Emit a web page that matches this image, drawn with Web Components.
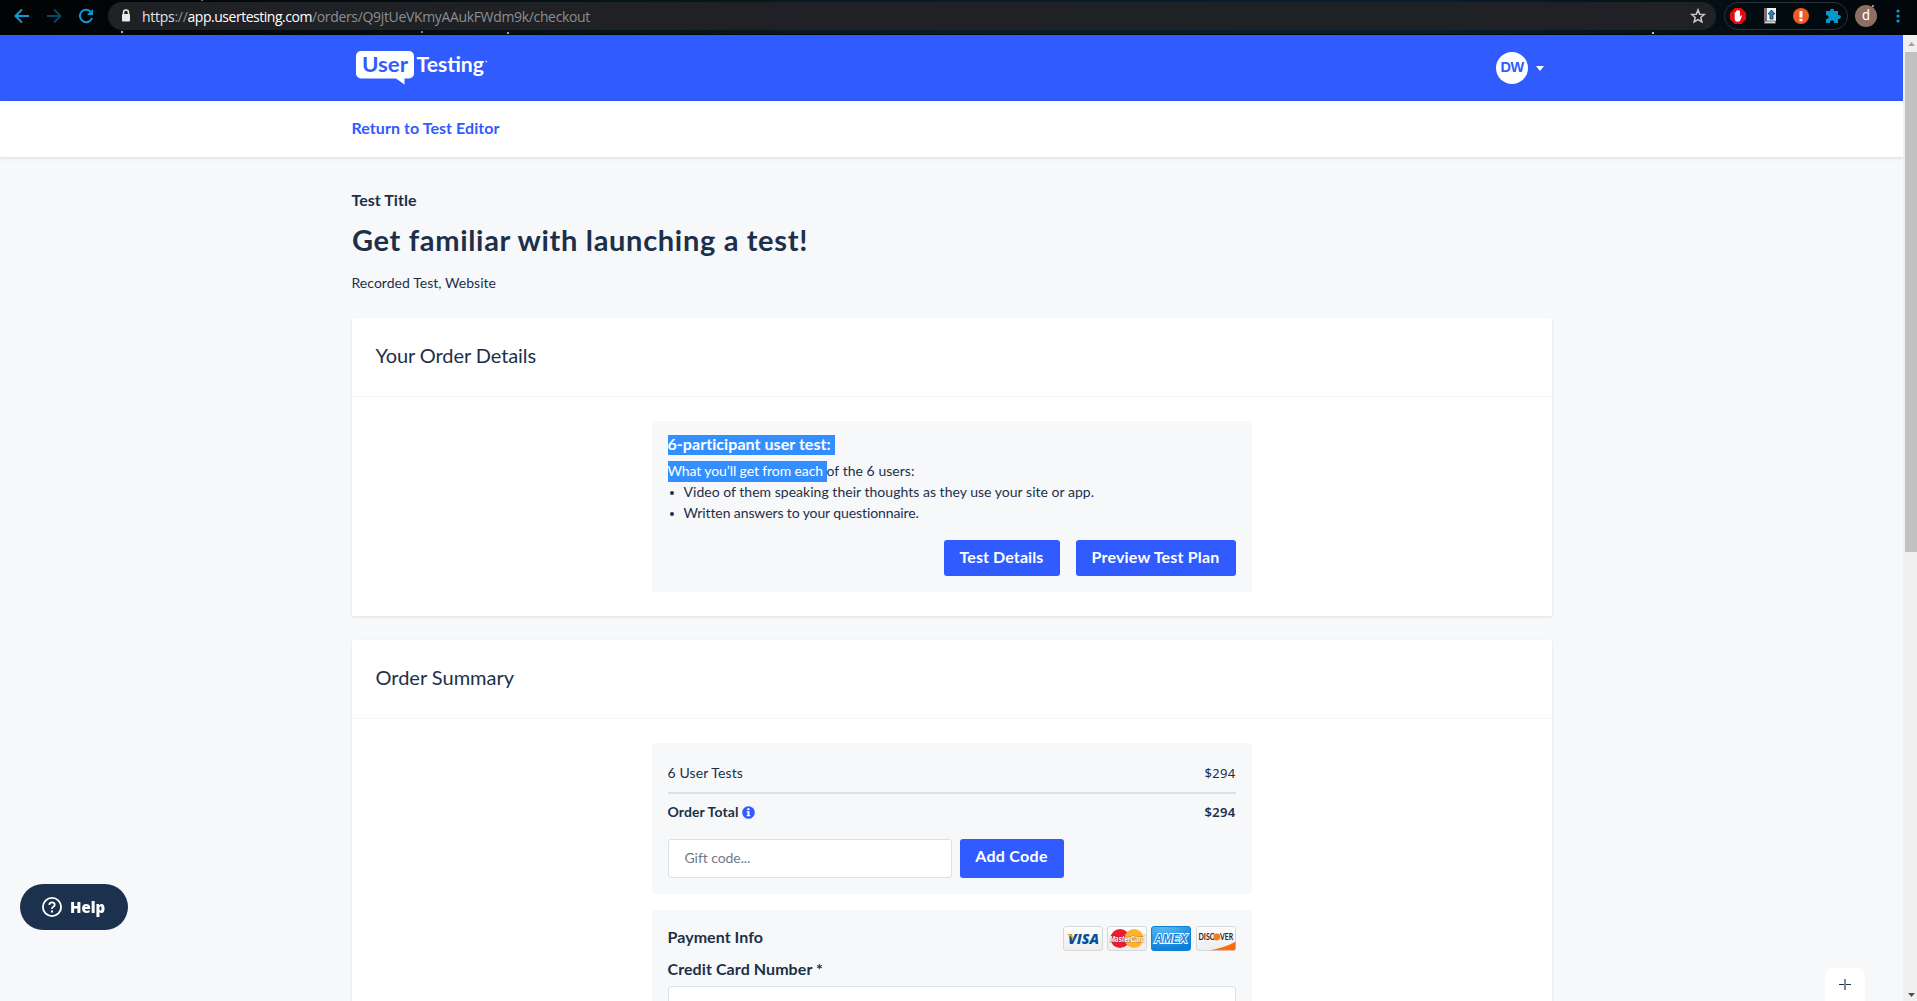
<!DOCTYPE html>
<html lang="en">
<head>
<meta charset="utf-8">
<title>UserTesting – Checkout</title>
<style>
html,body{margin:0;height:100%;overflow:hidden}
body{font-family:Lato,"Open Sans",sans-serif;color:#1c304a;background:#f7f8fa;font-size:14px}
</style>
</head>
<body>
<checkout-app></checkout-app>
<script>
const define = (name, html, setup) => customElements.define(name, class extends HTMLElement {
  constructor() {
    super();
    this.attachShadow({mode: 'open'}).innerHTML = html;
  }
  connectedCallback() { if (setup) setup(this, this.shadowRoot); }
});

// A single line of text whose tracking is adjusted to a given measure.
define('fit-text', `<style>:host{display:inline-block;white-space:nowrap;flex:none}span{display:inline-block}</style><span><slot></slot></span>`,
(el, root) => {
  const span = root.querySelector('span'), w = +el.getAttribute('w');
  el.style.width = w + 'px';
  const n = el.textContent.length;
  const natural = span.getBoundingClientRect().width;
  if (natural && n) span.style.letterSpacing = ((w - natural) / n) + 'px';
});

define('browser-bar', `<style>
:host{display:flex;align-items:center;height:35px;box-sizing:border-box;padding:0 12px 3px 6px;background-color:#020709;
background-image:radial-gradient(circle,#9fb3b8 0 1px,transparent 1.6px),radial-gradient(circle,#6f8589 0 1px,transparent 1.5px),radial-gradient(circle,#8fa5aa 0 1px,transparent 1.5px),radial-gradient(circle,#b4c8cc 0 1px,transparent 1.5px),radial-gradient(circle,#63777d 0 1px,transparent 1.5px),radial-gradient(circle,#8295a5 0 1px,transparent 1.5px),linear-gradient(90deg,#010203,#031014 25%,#051e27 50%,#04202b 75%,#020c11 92%,#010609);
background-size:6px 6px,6px 6px,6px 6px,6px 6px,6px 6px,6px 6px,100% 34px;background-repeat:no-repeat;
background-position:119px 29px,419px 29px,505px 30px,1650px 30px,199px -3px,1870px 3px,0 0}
.nav{width:32px;height:32px;flex:none}
.pill{flex:1;display:flex;align-items:center;height:28px;margin-left:6px;border-radius:14px;background:#202124;padding:0 6px 0 12px;font:14px "Open Sans","Noto Sans",sans-serif;color:#8b8e92}
.lock{width:12px;height:16px;margin-right:10px}
b{font-weight:400;color:#fff}i{font-style:normal;color:#e2e3e5}
.star{width:24px;height:24px;margin-left:auto}
.ext{display:flex;box-sizing:border-box;height:28px;width:124px;margin-left:8px;border:1px solid #26343a;border-radius:14px;align-items:center;justify-content:space-between;padding:0 4px 0 3px}
.ext svg{width:20px;height:20px}
.me{width:22px;height:22px;border-radius:50%;background:#8d6e63;color:#fff;font:14px/21px Roboto,sans-serif;text-align:center;margin-left:7px}
.dots{width:12px;height:16px;margin-left:15px;margin-right:1px}
</style>
<svg class="nav" viewBox="0 0 32 32" fill="none" stroke="#0d9bd0" stroke-width="2"><path d="M23 16H10M16 9.5 9.5 16l6.5 6.5"/></svg>
<svg class="nav" viewBox="0 0 32 32" fill="none" stroke="#064860" stroke-width="2"><path d="M9 16h13M16 9.5l6.5 6.5-6.500 6.500"/></svg>
<svg class="nav" viewBox="0 0 32 32" fill="none" stroke="#0d9bd0" stroke-width="2"><path d="M20.500 11.500A6.200 6.200 0 1 0 22 18"/><path d="M23 9v6h-6z" fill="#0d9bd0" stroke="none"/></svg>
<div class="pill"><svg class="lock" viewBox="0 0 12 16"><path d="M3.500 7V4.500a2.500 2.500 0 0 1 5 0V7" fill="none" stroke="#e8eaed" stroke-width="1.500"/><rect x="2" y="6" width="8" height="7.500" rx="1" fill="#e8eaed"/></svg>
<fit-text w="45.5"><i>https</i>://</fit-text><fit-text w="124.5"><b>app.usertesting.com</b></fit-text><fit-text w="278">/orders/Q9jtUeVKmyAAukFWdm9k/checkout</fit-text>
<svg class="star" viewBox="0 0 24 24" fill="none" stroke="#c6c8cb" stroke-width="1.500"><path d="m12 5.900 1.700 4.300 4.600.3-3.500 3 1.100 4.500L12 15.600 8.100 18l1.100-4.500-3.500-3 4.600-.3z"/></svg></div>
<div class="ext">
<svg viewBox="0 0 20 20"><path d="M6.700 2h6.600L18 6.700v6.600L13.300 18H6.700L2 13.300V6.700z" fill="#e40b0f"/><path d="M6.700 10V6.500q.6-.9 1.200 0V5q.7-1 1.300 0V4.200q.7-1 1.400 0V5q.7-.9 1.300 0v6l1-1.500q1-.6 1 .4l-1.400 4q-.7 1.800-2.900 1.800-2.900 0-2.900-3.200z" fill="#fff"/></svg>
<svg viewBox="0 0 20 20"><path d="M4 2h12v13H4z" fill="#f5f1e8"/><path d="M4 2h3v13H4z" fill="#756d77"/><path d="M4.500 15h11v2.500h-11z" fill="#d5d2c8" stroke="#554f58" stroke-width=".7"/><path d="m11.500 4 3.500 4h-2v5h-3V8H8z" fill="#1989d8" stroke="#143550" stroke-width=".8"/></svg>
<svg viewBox="0 0 20 20"><circle cx="10" cy="10" r="8" fill="#f15a24"/><path d="M8.500 5h3v6.500h-3zM8.500 12.700h3v2.500h-3z" fill="#fff"/></svg>
<svg viewBox="0 0 20 20"><path d="M3 5h4.200C6.400 1.900 11.800 1.900 11 5h4v4.200c3.800-1 3.800 4.600 0 3.700V17h-3.800c.2-3.600-4.500-3.600-4.300 0H3v-3.800c3.400.2 3.400-4.300 0-4.100z" fill="#0797ca"/></svg>
</div>
<div class="me">d</div>
<svg class="dots" viewBox="0 0 12 16" fill="#0d9bd0"><circle cx="6" cy="3" r="1.600"/><circle cx="6" cy="8" r="1.600"/><circle cx="6" cy="13" r="1.600"/></svg>`);

define('site-header', `<style>
:host{display:block}
.top{background:#2f5bff;height:66px;box-sizing:border-box;padding:10px 352px 0 352px;display:flex;align-items:flex-start}
.logo{width:140px;height:46px;display:block;font-family:Lato,sans-serif}
.user{margin:7px 7px 0 auto;display:flex;align-items:center;gap:8px}
.av{width:32px;height:32px;border-radius:50%;background:#fff;color:#2f5bff;font:700 14.5px/30px "Liberation Sans",sans-serif;text-align:center;letter-spacing:-.6px}
.caret{width:8px;height:5px}
.sub{height:56px;background:#fff;box-shadow:0 1px 4px rgba(0,0,0,.13);padding-left:351.5px;font:700 16px/53px Lato,sans-serif;color:#2f5bff}
</style>
<div class="top">
<svg class="logo" viewBox="352 45 140 46"><path d="M361 51h48a5 5 0 0 1 5 5v17.500a5 5 0 0 1-5 5h-4.500V84.500L396 78.500h-35a5 5 0 0 1-5-5V56a5 5 0 0 1 5-5z" fill="#fff"/><text x="362" y="72" font-size="20" font-weight="700" fill="#2f5bff" textLength="46" lengthAdjust="spacingAndGlyphs">User</text><text x="416.500" y="72" font-size="20" font-weight="700" fill="#fff" textLength="67.500" lengthAdjust="spacingAndGlyphs">Testing</text><circle cx="486.300" cy="61.500" r=".9" fill="#c6d2ff"/></svg>
<div class="user"><div class="av">DW</div><svg class="caret" viewBox="0 0 8 5"><path d="M0 0h8L4 5z" fill="#fff"/></svg></div>
</div>
<div class="sub"><fit-text w="148">Return to Test Editor</fit-text></div>`);

define('order-card', `<style>
:host{display:block;width:1200px;background:#fff;box-shadow:0 1px 3px rgba(0,0,0,.1);border-radius:2px}
header{height:78px;box-sizing:content-box;border-bottom:1px solid #f4f5f7;padding-left:24px;font-size:20px;line-height:75px}
.body{display:flex;flex-direction:column;align-items:center;gap:16px;padding:24px 0}
</style><header><slot name="title"></slot></header><div class="body"><slot></slot></div>`);

define('soft-panel', `<style>:host{display:block;box-sizing:border-box;width:600px;background:#f7f8fa;border-radius:4px;padding:0 16px}</style><slot></slot>`);

define('blue-button', `<style>:host{display:flex;justify-content:center;box-sizing:border-box;background:#2f5bff;color:#fff;border-radius:3px;font:700 16px/34px Lato,sans-serif;height:36px}</style><slot></slot>`);

define('card-badges', `<style>:host{display:block;width:173px;height:25px}svg{display:block;font-family:"Open Sans",sans-serif;font-weight:700}</style>
<svg width="173" height="25" viewBox="0 0 173 25">
<defs><linearGradient id="w" x2="0" y2="1"><stop stop-color="#fff"/><stop offset="1" stop-color="#ededed"/></linearGradient><radialGradient id="b" cx=".3" cy="0" r="1"><stop stop-color="#5dbcef"/><stop offset="1" stop-color="#0a80dc"/></radialGradient><clipPath id="c"><rect x="133.500" y=".5" width="39" height="24" rx="2.500"/></clipPath></defs>
<g fill="url(#w)" stroke="#d6d8da"><rect x=".5" y=".5" width="39" height="24" rx="2.500"/><rect x="44.500" y=".5" width="39" height="24" rx="2.500"/><rect x="133.500" y=".5" width="39" height="24" rx="2.500"/></g>
<text x="5" y="18" font-size="14" font-style="italic" font-weight="800" fill="#064f9a" textLength="31" lengthAdjust="spacingAndGlyphs">VISA</text><path d="M3 8h4.500q1.500 0 2 2l1 4Q8 9.500 3 8z" fill="#f5a51c"/>
<circle cx="57" cy="12.500" r="9.500" fill="#ed1b2e"/><circle cx="71" cy="12.500" r="9.500" fill="#fdb32d"/><text transform="translate(46.500 16) scale(.68 1)" font-family="Liberation Sans,sans-serif" font-size="9.500" font-style="italic" fill="#fff" stroke="#4b3030" stroke-width=".9" stroke-opacity=".5" paint-order="stroke">MasterCard</text>
<rect x="88.500" y=".5" width="39" height="24" rx="2.500" fill="url(#b)" stroke="#1480d0"/><text transform="translate(91.500 17) scale(.95 1)" font-family="Liberation Sans,sans-serif" font-size="12" font-style="italic" fill="#1385da" stroke="#fff" stroke-width="1.800" paint-order="stroke">AMEX</text>
<path d="M145 24.500q15-2 28-9v9z" fill="#ff6a0c" clip-path="url(#c)"/><circle cx="153.800" cy="11" r="3.400" fill="#f47b20"/><g fill="#2a2725" font-family="Lato,sans-serif" font-size="9"><text transform="translate(135.500 14) scale(.78 1)">DISC</text><text transform="translate(157 14) scale(.76 1)">VER</text></g>
</svg>`);

define('test-summary', `<style>
:host{display:block;height:171px}
.h{display:flex;font-size:16px;font-weight:700;line-height:18px;color:#fff;padding-top:14px;height:20px}
.h span,.w span{display:block;background:#338fff}
.h span{width:167px}
.w{display:flex;color:#1c304a;line-height:19px;margin-top:6px;height:21px}
.w span{color:#fff}
ul{list-style:none;margin:0;padding:0}li{display:flex;line-height:19px;height:21px}
li::before{content:"";width:4px;height:4px;border-radius:50%;background:#1c304a;margin:9px 10px 0 2px}
.btns{display:flex;justify-content:flex-end;gap:16px;margin-top:16px}
</style>
<div class="h"><span><fit-text w="163.500">6-participant user test:</fit-text></span></div>
<div class="w"><span><fit-text w="159">What you’ll get from each&nbsp;</fit-text></span><fit-text w="88">of the 6 users:</fit-text></div>
<ul><li><fit-text w="410.500">Video of them speaking their thoughts as they use your site or app.</fit-text></li><li><fit-text w="235">Written answers to your questionnaire.</fit-text></li></ul>
<div class="btns"><blue-button style="width:116px"><fit-text w="84">Test Details</fit-text></blue-button><blue-button style="width:160px"><fit-text w="128">Preview Test Plan</fit-text></blue-button></div>`);

define('order-lines', `<style>
:host{display:block;height:151px;box-sizing:border-box;padding-top:20px}
.row{display:flex;align-items:center;line-height:20px;height:20px}
.row>:last-child{margin-left:auto}
.a{height:29px;border-bottom:2px solid #dce0e6;align-items:flex-start}
.t{font-weight:700;margin-top:8px}
.t svg{width:13px;height:13px;margin-left:3px}
.p{font-family:"Noto Sans",sans-serif;font-size:13px}
.t .p{font-weight:600}
.gift{display:flex;gap:8px;margin-top:17px}
.in{box-sizing:border-box;width:284px;height:39px;background:#fff;border:1px solid #dce0e6;border-radius:3px;padding-left:16px;line-height:35px;color:#6f7a89}
blue-button{height:39px;width:104px;line-height:34px}
</style>
<div class="row a"><fit-text w="75.500">6 User Tests</fit-text><fit-text class="p" w="31">$294</fit-text></div>
<div class="row t"><fit-text w="71">Order Total</fit-text><svg viewBox="0 0 13 13"><circle cx="6.500" cy="6.500" r="6.300" fill="#2f5bff"/><path d="M5.300 2.300h2.200v1.900H5.300zM4.700 5.200h2.800v3.900h.8v1.200H4.700V9.100h.8V6.400h-.8z" fill="#fff"/></svg><fit-text class="p" w="31">$294</fit-text></div>
<div class="gift"><div class="in"><fit-text w="65.500">Gift code...</fit-text></div><blue-button><fit-text w="72.500">Add Code</fit-text></blue-button></div>`);

define('payment-form', `<style>
:host{display:block;height:180px;font-size:16px;font-weight:700;line-height:22px}
.r{display:flex;justify-content:space-between;padding-top:16px;height:25px}
.l{margin-top:7px;height:22px}
.in{box-sizing:border-box;height:39px;background:#fff;border:1px solid #dce0e6;border-radius:3px;margin-top:6px}
</style>
<div class="r"><fit-text w="95.500">Payment Info</fit-text><card-badges></card-badges></div>
<div class="l"><fit-text w="155.500">Credit Card Number *</fit-text></div>
<div class="in"></div>`);

define('scroll-rail', `<style>
:host{display:flex;flex-direction:column;width:14px;background:#f0f0f0;flex:none}
svg{width:14px;height:17px;flex:none}.thumb{height:500px;background:#c1c1c1;margin-left:2px}.end{margin-top:auto}
</style><svg viewBox="0 0 14 17"><path d="M5 11h7L8.500 7z" fill="#a3a3a3"/></svg><div class="thumb"></div><svg class="end" viewBox="0 0 14 17"><path d="M5 9h7L8.500 13z" fill="#505050"/></svg>`);

define('help-button', `<style>
:host{position:fixed;left:20px;top:884px;width:108px;height:46px;border-radius:23px;background:#1b314d;color:#fff;display:flex;align-items:center;box-sizing:border-box;padding-left:21px;font:800 15px/46px "Open Sans",sans-serif}
svg{width:22px;height:22px;margin-right:7px}
</style><svg viewBox="0 0 22 22" fill="none" stroke="#fff" stroke-width="1.800"><circle cx="11" cy="11" r="9.100"/><path d="M8.300 9q0-2.700 2.700-2.700T13.700 8.700q0 1.300-1.400 2.100T11 13"/><path d="M11 14.500v2" stroke-width="2"/></svg><fit-text w="35">Help</fit-text>`);

define('add-tab', `<style>
:host{position:fixed;left:1825px;top:968px;width:40px;height:40px;border-radius:8px;background:#fff}
svg{display:block;width:40px;height:33px}
</style><svg viewBox="0 0 40 33"><path d="M14 16.500h12" stroke="#1c304a" stroke-width="1"/><path d="M20 11v11" stroke="#7d8a9a" stroke-width="2"/></svg>`);

define('checkout-app', `<style>
:host{display:flex;flex-direction:column;height:1001px;width:1917px;overflow:hidden}
.view{display:flex;flex:1;min-height:0}
.page{flex:1;overflow:hidden}
main{padding:33px 0 0 351.5px}
.k{font-size:16px;font-weight:700;line-height:20px}
h1{margin:12px 0 0 .5px;font-size:29px;line-height:36px;height:36px;font-weight:700}
.m{line-height:20px;margin-top:15px;height:20px}
order-card{margin-top:25px}order-card+order-card{margin-top:24px}
</style>
<browser-bar></browser-bar>
<div class="view"><div class="page"><site-header></site-header>
<main><div class="k"><fit-text w="65">Test Title</fit-text></div>
<h1><fit-text w="456">Get familiar with launching a test!</fit-text></h1>
<div class="m"><fit-text w="144.500">Recorded Test, Website</fit-text></div>
<order-card><fit-text slot="title" w="160.500">Your Order Details</fit-text><soft-panel><test-summary></test-summary></soft-panel></order-card>
<order-card><fit-text slot="title" w="138.500">Order Summary</fit-text><soft-panel><order-lines></order-lines></soft-panel><soft-panel><payment-form></payment-form></soft-panel></order-card>
</main></div><scroll-rail></scroll-rail></div>
<help-button></help-button><add-tab></add-tab>`);
</script>
</body>
</html>
